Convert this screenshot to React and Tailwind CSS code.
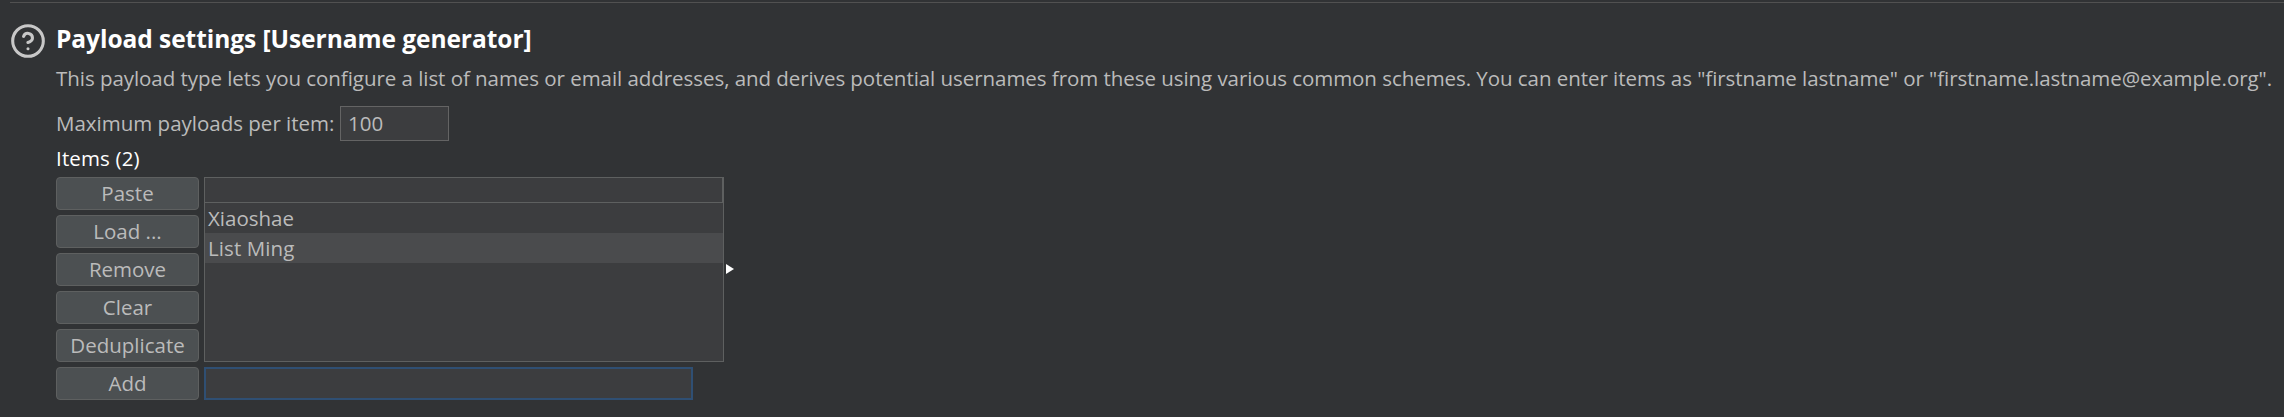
const buttons = ["Paste", "Load ...", "Remove", "Clear", "Deduplicate"];

function Button({ label }) {
  return (
    <button className="flex h-[33px] w-[143px] items-center justify-center rounded-[4px] border border-[#5e6060] bg-[#4c5052] leading-[31px]">
      {label}
    </button>
  );
}

export default function App() {
  return (
    <div className="h-[417px] w-[2284px] overflow-hidden bg-[#313335] pt-[2px] font-['Open_Sans','Noto_Sans',sans-serif] text-[20.5px] whitespace-nowrap text-[#bbbbbb]">
      <div className="ml-[10px] h-px bg-[#515151]" />
      <div className="flex gap-[11px] pl-[11px]">
        <svg className="mt-[21px] size-[34px] shrink-0" viewBox="0.9 0.9 22.2 22.2" fill="none" stroke="#c8c8c8" strokeWidth="2" strokeLinecap="round" strokeLinejoin="round">
          <circle cx="12" cy="12" r="10" />
          <path d="M9.09 9a3 3 0 0 1 5.83 1c0 2-3 3-3 3" />
          <path d="M12 17h.01" />
        </svg>
        <div className="flex flex-col pt-[17px]">
          <h1 className="h-[38px] text-[24.5px] leading-[38px] font-bold tracking-[-0.05px] text-white">Payload settings [Username generator]</h1>
          <p className="mt-1 h-8 leading-8 tracking-[-0.05px]">This payload type lets you configure a list of names or email addresses, and derives potential usernames from these using various common schemes. You can enter items as "firstname lastname" or "firstname.lastname@example.org".</p>
          <div className="mt-3 flex h-[35px]">
            <span className="w-[284px] leading-[35px]">Maximum payloads per item:</span>
            <div className="w-[109px] border border-[#646464] bg-[#3c3d3f] pl-[7px] leading-[33px]">100</div>
          </div>
          <div className="h-9 pt-[9px] leading-4 tracking-[0.15px] text-white">Items (2)</div>
          <div className="flex gap-[5px]">
            <div className="flex flex-col gap-[5px]">
              {buttons.map((label) => <Button key={label} label={label} />)}
            </div>
            <div className="flex items-start">
              <div className="h-[185px] w-[520px] border border-[#5e6060] bg-[#3c3d3f]">
                <div className="h-[25px] border-r border-b border-[#5e6060]" />
                <div className="h-[30px] pl-[3px] leading-[30px]">Xiaoshae</div>
                <div className="h-[30px] bg-[#4a4b4d] pl-[3px] leading-[30px] tracking-[0.1px]">List Ming</div>
              </div>
              <svg className="mt-[87px] ml-[2px] h-[10px] w-[8px]" viewBox="0 0 8 10" fill="white"><path d="M0 0L8 5L0 10Z" /></svg>
            </div>
          </div>
          <div className="mt-[5px] flex gap-[5px]">
            <Button label="Add" />
            <div className="h-[33px] w-[489px] border-2 border-[#2f4f73] bg-[#3c3d3f]" />
          </div>
        </div>
      </div>
    </div>
  );
}
